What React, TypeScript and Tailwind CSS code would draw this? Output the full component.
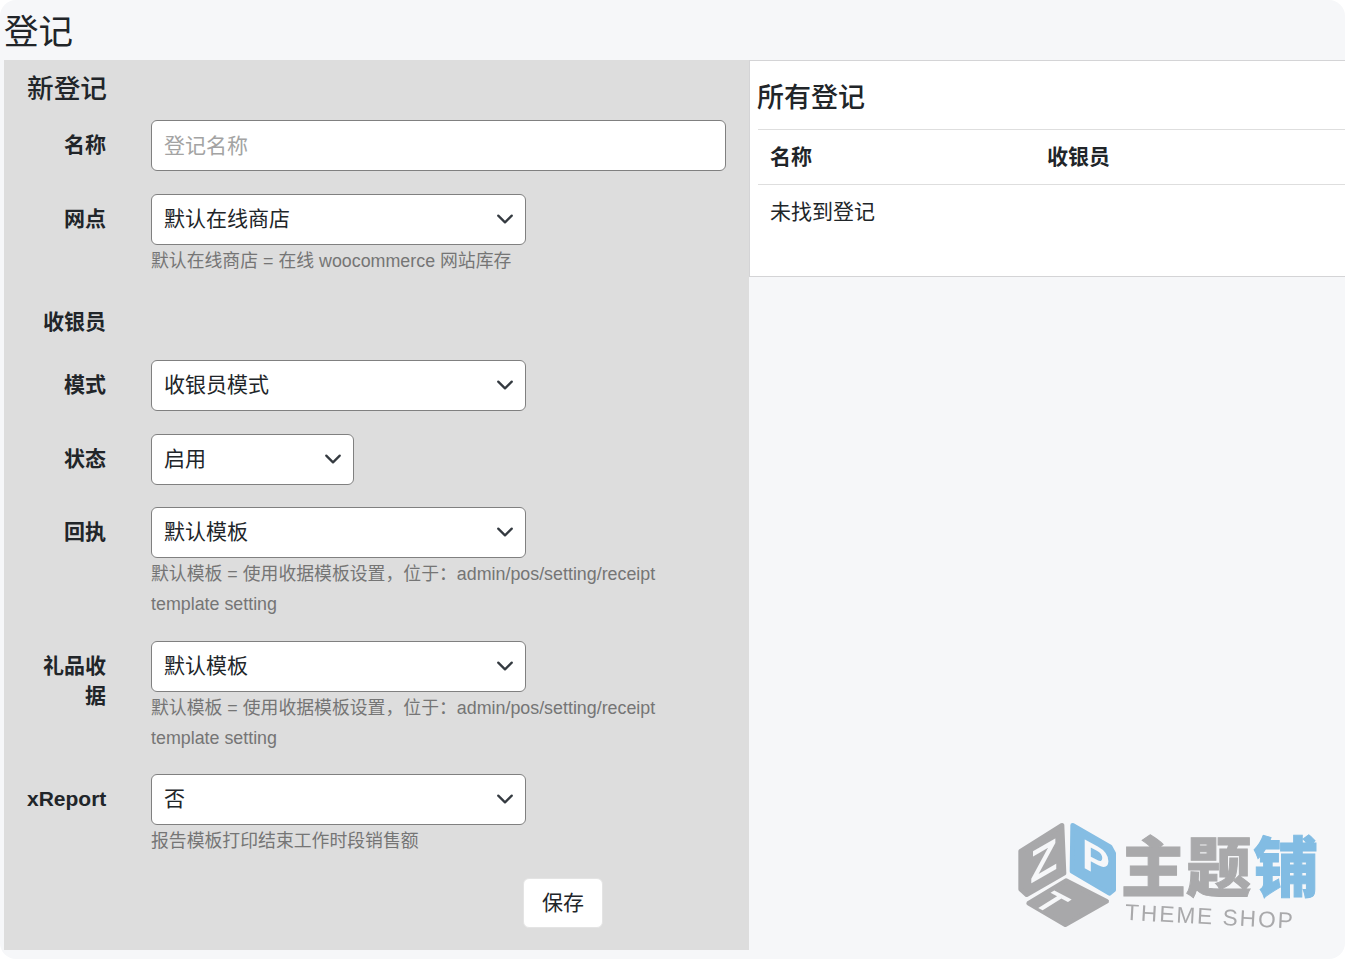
const font = "font-['Liberation_Sans','Noto_Sans_CJK_SC',sans-serif]";

function Select({ value, width }: { value: string; width: string }) {
  return (
    <div className={`relative ${width}`}>
      <select
        defaultValue={value}
        className="block h-[51px] w-full appearance-none rounded-[6px] border border-[#808080] bg-white pb-[2px] pl-[12px] pr-10 text-[21px] text-[#212529] outline-none"
      >
        <option>{value}</option>
      </select>
      <svg
        viewBox="0 0 16 16"
        className="pointer-events-none absolute right-[12px] top-[16px] h-[18px] w-[18px]"
        fill="none"
        stroke="#343a40"
        strokeWidth="2"
        strokeLinecap="round"
        strokeLinejoin="round"
      >
        <path d="m2 5 6 6 6-6" />
      </svg>
    </div>
  );
}

function Row({
  label,
  hint,
  className,
  children,
}: {
  label: string;
  hint?: string;
  className?: string;
  children?: React.ReactNode;
}) {
  return (
    <div className={`flex ${className ?? ''}`}>
      <label className="w-[79px] shrink-0 pt-[10px] text-right text-[21px] font-bold leading-[30px] text-[#212529]">
        {label}
      </label>
      <div className="ml-[45px] w-[575px]">
        {children}
        {hint && <p className="pt-[1px] text-[17.85px] leading-[30px] text-[#757575] -mb-[1px]">{hint}</p>}
      </div>
    </div>
  );
}

function Logo() {
  return (
    <svg
      viewBox="0 0 1035 477"
      className="pointer-events-none absolute bottom-0 right-0 h-[159px] w-[345px] blur-[0.6px]"
    >
      <g strokeLinejoin="round" strokeWidth="14">
        <path d="M186 76 192 220 80 284 62 268 62 154Z" fill="#a8a8aa" stroke="#a8a8aa" />
        <path d="M218 76 330 140 341 160 341 270 328 280 216 214Z" fill="#85bde3" stroke="#85bde3" />
        <path d="M198 242 320 304 196 374 86 310Z" fill="#a8a8aa" stroke="#a8a8aa" />
      </g>
      <text
        transform="translate(90 252) skewY(-30)"
        fill="#f6f7f9"
        fontFamily="Liberation Sans"
        fontWeight="700"
        fontSize="135"
      >
        Z
      </text>
      <text
        transform="translate(246 200) skewY(28)"
        fill="#f6f7f9"
        fontFamily="Liberation Sans"
        fontWeight="700"
        fontSize="125"
      >
        P
      </text>
      <text
        transform="translate(128 292) rotate(28) skewX(-30)"
        fill="#f6f7f9"
        fontFamily="Liberation Sans"
        fontWeight="700"
        fontSize="100"
        y="34"
      >
        T
      </text>
      <g fontFamily="Noto Sans CJK SC" fontWeight="900" fontSize="196" strokeWidth="3">
        <text x="362" y="274" fill="#a9a9ab" stroke="#a9a9ab">
          主题
        </text>
        <text x="760" y="272" fill="#82bce3" stroke="#82bce3">
          铺
        </text>
      </g>
      <text
        transform="rotate(3 385 345)"
        x="375"
        y="360"
        fill="#a9a9ab"
        fontFamily="Liberation Sans"
        fontSize="68"
        letterSpacing="6"
      >
        THEME SHOP
      </text>
    </svg>
  );
}

export default function App() {
  return (
    <div className={`h-[959px] w-full overflow-hidden bg-white ${font}`}>
      <div className="relative h-full rounded-[16px] bg-[#f6f7f9] pl-1">
        <h1 className="h-[60px] pt-[12px] text-[34.5px] leading-[40px] text-[#212529]">登记</h1>
        <div className="flex items-start">
          <div className="h-[890px] w-[745px] shrink-0 bg-[#dddddd] pl-[23px]">
            <h2 className="pt-[11px] text-[26.7px] font-medium leading-[36px] text-[#212529]">新登记</h2>
            <Row label="名称" className="mt-[13px]">
              <input
                placeholder="登记名称"
                className="block h-[51px] w-full rounded-[6px] border border-[#808080] bg-white px-3 text-[21px] outline-none placeholder:text-[#a3a3a3]"
              />
            </Row>
            <Row label="网点" hint="默认在线商店 = 在线 woocommerce 网站库存" className="mt-[23px]">
              <Select value="默认在线商店" width="w-[375px]" />
            </Row>
            <Row label="收银员" className="mt-[22px] h-[40px]" />
            <Row label="模式" className="mt-[23px]">
              <Select value="收银员模式" width="w-[375px]" />
            </Row>
            <Row label="状态" className="mt-[23px]">
              <Select value="启用" width="w-[203px]" />
            </Row>
            <Row
              label="回执"
              hint="默认模板 = 使用收据模板设置，位于：admin/pos/setting/receipt template setting"
              className="mt-[22px]"
            >
              <Select value="默认模板" width="w-[375px]" />
            </Row>
            <Row
              label="礼品收据"
              hint="默认模板 = 使用收据模板设置，位于：admin/pos/setting/receipt template setting"
              className="mt-[23px]"
            >
              <Select value="默认模板" width="w-[375px]" />
            </Row>
            <Row label="xReport" hint="报告模板打印结束工作时段销售额" className="mt-[22px]">
              <Select value="否" width="w-[375px]" />
            </Row>
            <div className="mt-[23px] pl-[496px]">
              <button className="h-[50px] w-[80px] rounded-[6px] border border-[#e4e4e4] bg-white text-[21px] text-[#212529]">
                保存
              </button>
            </div>
          </div>
          <div className="h-[217px] flex-1 border border-r-0 border-[#d4d4d6] bg-white pl-[8px]">
            <h2 className="-ml-px h-[68px] pt-[18px] text-[27px] font-medium leading-[38px] text-[#212529]">所有登记</h2>
            <div className="flex h-[56px] items-center border-y border-[#dedede] pb-[1px] pl-[12px] text-[21px] font-bold text-[#212529]">
              <span className="w-[277px]">名称</span>
              <span>收银员</span>
            </div>
            <p className="pl-[12px] pt-[12px] text-[21px] leading-[30px] text-[#212529]">未找到登记</p>
          </div>
        </div>
        <Logo />
      </div>
    </div>
  );
}
